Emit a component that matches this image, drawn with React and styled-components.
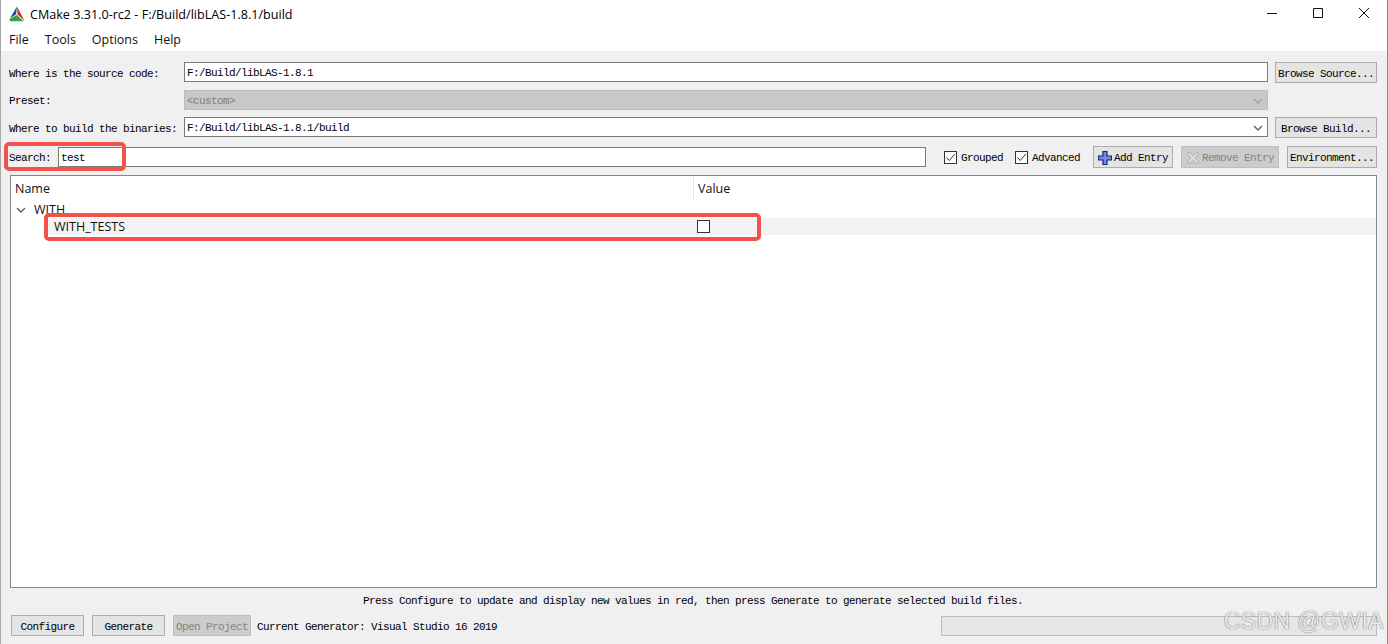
import React from 'react'
import styled, { createGlobalStyle } from 'styled-components'

const GlobalStyle = createGlobalStyle`
  html, body { margin: 0; padding: 0; height: 100%; background: #fff; }
  #root { height: 100%; }
  * { box-sizing: border-box; }
`

const bitmapFont = `
  font-family: "Liberation Mono", "Noto Sans CJK SC", monospace;
  font-size: 11px;
  letter-spacing: -0.6px;
  color: #000;
  white-space: pre;
`

const Window = styled.div`
  position: relative;
  width: 1388px;
  height: 644px;
  display: flex;
  flex-direction: column;
  overflow: hidden;
  background: #fff;
  border-left: 1px solid #a8a8a8;
  border-right: 1px solid #8a8a8a;
  font-family: "Open Sans", "Noto Sans", sans-serif;
`

const TitleBar = styled.div`
  height: 28px;
  flex: none;
  display: flex;
  align-items: center;
  padding-left: 8px;
  font-size: 12.6px;
  color: #000;
`

const TitleText = styled.span`
  margin-left: 5px;
  flex: 1;
`

const WinButtons = styled.div`
  display: flex;
  height: 100%;
  align-items: center;
  padding: 0 18px 2px 0;
  gap: 36px;
`

const MenuBar = styled.div`
  height: 23px;
  flex: none;
  display: flex;
  padding: 3px 0 0 8px;
  gap: 16px;
  font-size: 12.5px;
  color: #111;
`

const Body = styled.div`
  flex: 1;
  display: flex;
  flex-direction: column;
  background: #f0f0f0;
  padding: 11px 10px 8px 8px;
`

const PathGrid = styled.div`
  display: grid;
  grid-template-columns: 168px 1fr 102px;
  grid-template-rows: 28px 27px 21px;
  column-gap: 7px;
  align-items: start;
`

const Label = styled.span`
  ${bitmapFont}
  display: block;
  padding-top: ${({ $top }) => $top || 5}px;
`

const Field = styled.div`
  height: 20px;
  display: flex;
  align-items: center;
  justify-content: space-between;
  padding: 1px 4px 0 2px;
  background: ${({ $disabled }) => ($disabled ? '#c8c8c8' : '#fff')};
  border: 1px solid ${({ $disabled }) => ($disabled ? '#bcbcbc' : '#7a7a7a')};
  ${bitmapFont}
  color: ${({ $disabled }) => ($disabled ? '#7d7d7d' : '#000')};
  width: ${({ $width }) => ($width ? `${$width}px` : 'auto')};
`

const Button = styled.div`
  height: ${({ $h }) => $h || 21}px;
  width: ${({ $w }) => ($w ? `${$w}px` : 'auto')};
  flex: none;
  display: flex;
  align-items: center;
  justify-content: center;
  padding-top: 2px;
  background: ${({ $disabled }) => ($disabled ? '#cccccc' : '#e4e4e4')};
  border: 1px solid ${({ $disabled }) => ($disabled ? '#bfbfbf' : '#adadad')};
  ${bitmapFont}
  color: ${({ $disabled }) => ($disabled ? '#838383' : '#000')};
`

const SearchRow = styled.div`
  display: flex;
  align-items: center;
  height: 22px;
  margin-top: 8px;
`

const SearchLabel = styled(Label)`
  width: 49px;
  flex: none;
  padding-top: 2px;
`

const Check = styled.div`
  display: flex;
  align-items: center;
  gap: 4px;
  margin-left: ${({ $ml }) => $ml}px;
  padding-top: 1px;
  ${bitmapFont}
`

const CheckBox = styled.div`
  width: 13px;
  height: 13px;
  flex: none;
  display: flex;
  align-items: center;
  justify-content: center;
  background: #fff;
  border: 1px solid #333;
`

const ButtonGroup = styled.div`
  display: flex;
  gap: 8px;
  margin-left: 13px;
`

const IconButton = styled(Button)`
  gap: 2px;
`

const Table = styled.div`
  margin: 7px 0 0 1px;
  height: 413px;
  flex: none;
  background: #fff;
  border: 1px solid #828790;
  font-size: 12.5px;
  color: #111;
`

const HeaderRow = styled.div`
  height: 25px;
  display: grid;
  grid-template-columns: 683px 1fr;
`

const HeaderCell = styled.div`
  display: flex;
  align-items: center;
  padding-left: ${({ $pad }) => $pad}px;
  border-right: ${({ $sep }) => ($sep ? '1px solid #e5e5e5' : 'none')};
`

const GroupRow = styled.div`
  height: 17px;
  display: flex;
  align-items: center;
  padding-left: 5px;
  gap: 8px;
`

const EntryRow = styled.div`
  height: 17px;
  margin-left: 35px;
  display: grid;
  grid-template-columns: 647px 1fr;
  align-items: center;
  background: #f3f3f3;
`

const EntryName = styled.span`
  padding: 0 0 1px 8px;
`

const EntryCheck = styled.div`
  width: 13px;
  height: 13px;
  margin: 0 0 1px 4px;
  background: #fff;
  border: 1px solid #333;
`

const StatusText = styled.div`
  height: 27px;
  display: flex;
  align-items: center;
  justify-content: center;
  padding-bottom: 1px;
  ${bitmapFont}
`

const BottomRow = styled.div`
  display: flex;
  align-items: center;
  height: 21px;
  padding-left: 2px;
  gap: 8px;
`

const GeneratorText = styled.span`
  ${bitmapFont}
  margin-left: -2px;
  padding-top: 3px;
  flex: 1;
`

const Progress = styled.div`
  width: 436px;
  height: 20px;
  background: #e6e6e6;
  border: 1px solid #bcbcbc;
`

const Callout = styled.div`
  position: absolute;
  left: ${({ $x }) => $x}px;
  top: ${({ $y }) => $y}px;
  width: ${({ $w }) => $w}px;
  height: ${({ $h }) => $h}px;
  border: 4px solid #f4504c;
  border-radius: 5px;
  pointer-events: none;
`

const Watermark = styled.div`
  position: absolute;
  right: 3px;
  top: 608px;
  font-family: "Liberation Sans", Arial, sans-serif;
  font-size: 23px;
  letter-spacing: 0.4px;
  color: rgba(255, 255, 255, 0.85);
  text-shadow: 0 0 1px #777, 0 0 1px #777;
  white-space: pre;
`

const Chevron = ({ color = '#606060', size = 10 }) => (
  <svg width={size} height={size * 0.6} viewBox="0 0 10 6" fill="none">
    <path d="M1 1l4 4 4-4" stroke={color} strokeWidth="1.4" />
  </svg>
)

const CMakeLogo = () => (
  <svg width="16" height="16" viewBox="0 0 16 16">
    <path d="M8 0.5L1 12.2 7.2 8.2z" fill="#1f4e9c" />
    <path d="M8 0.5L15.5 15 8.6 8.6z" fill="#d3262c" />
    <path d="M0.5 13L7.8 9 14.6 15.2H1z" fill="#3b9e43" />
    <path d="M8 1.5L7.6 8.4 8.4 8.6z" fill="#c8c8c8" />
  </svg>
)

const Tick = () => (
  <svg width="11" height="11" viewBox="0 0 11 11" fill="none">
    <path d="M1.5 5.5L4.3 8.5 9.8 2" stroke="#333" strokeWidth="1" />
  </svg>
)

const PlusIcon = () => (
  <svg width="14" height="14" viewBox="0 0 14 14">
    <path
      d="M5 .5h4v4.500h4.500v4H9v4.500H5V9H.5V5H5z"
      fill="#6f8fd8"
      stroke="#12238a"
      strokeWidth="1.2"
    />
  </svg>
)

const RemoveIcon = () => (
  <svg width="14" height="14" viewBox="0 0 14 14">
    <path
      d="M3 1l4 3.500L11 1l2 2-3.500 4L13 11l-2 2-4-3.500L3 13l-2-2 3.500-4L1 3z"
      fill="#dadada"
      stroke="#adadad"
      strokeWidth="1"
    />
  </svg>
)

const Minimize = () => (
  <svg width="10" height="10" viewBox="0 0 10 10">
    <path d="M0 5.500h10" stroke="#111" strokeWidth="1" />
  </svg>
)

const Maximize = () => (
  <svg width="10" height="10" viewBox="0 0 10 10" fill="none">
    <path d="M.5.500h9v9h-9z" stroke="#111" strokeWidth="1" />
  </svg>
)

const CloseIcon = () => (
  <svg width="10" height="10" viewBox="0 0 10 10" fill="none">
    <path d="M0 0l10 10M10 0L0 10" stroke="#111" strokeWidth="1" />
  </svg>
)

export default function App() {
  return (
    <>
      <GlobalStyle />
      <Window>
        <TitleBar>
          <CMakeLogo />
          <TitleText>CMake 3.31.0-rc2 - F:/Build/libLAS-1.8.1/build</TitleText>
          <WinButtons>
            <Minimize />
            <Maximize />
            <CloseIcon />
          </WinButtons>
        </TitleBar>
        <MenuBar>
          <span>File</span>
          <span>Tools</span>
          <span>Options</span>
          <span>Help</span>
        </MenuBar>
        <Body>
          <PathGrid>
            <Label $top={6}>Where is the source code:</Label>
            <Field>F:/Build/libLAS-1.8.1</Field>
            <Button>Browse Source...</Button>
            <Label>Preset:</Label>
            <Field $disabled>
              {'<custom>'}
              <Chevron color="#a0a0a0" />
            </Field>
            <span />
            <Label $top={6}>Where to build the binaries:</Label>
            <Field>
              F:/Build/libLAS-1.8.1/build
              <Chevron />
            </Field>
            <Button>Browse Build...</Button>
          </PathGrid>
          <SearchRow>
            <SearchLabel>Search:</SearchLabel>
            <Field $width={868}>test</Field>
            <Check $ml={18}>
              <CheckBox>
                <Tick />
              </CheckBox>
              Grouped
            </Check>
            <Check $ml={12}>
              <CheckBox>
                <Tick />
              </CheckBox>
              Advanced
            </Check>
            <ButtonGroup>
              <IconButton $w={80} $h={22}>
                <PlusIcon />
                Add Entry
              </IconButton>
              <IconButton $w={98} $h={22} $disabled>
                <RemoveIcon />
                Remove Entry
              </IconButton>
              <Button $w={90} $h={22}>Environment...</Button>
            </ButtonGroup>
          </SearchRow>
          <Table>
            <HeaderRow>
              <HeaderCell $pad={4} $sep>Name</HeaderCell>
              <HeaderCell $pad={4}>Value</HeaderCell>
            </HeaderRow>
            <GroupRow>
              <Chevron />
              <span>WITH</span>
            </GroupRow>
            <EntryRow>
              <EntryName>WITH_TESTS</EntryName>
              <EntryCheck />
            </EntryRow>
          </Table>
          <StatusText>
            Press Configure to update and display new values in red, then press Generate to generate selected build files.
          </StatusText>
          <BottomRow>
            <Button $w={73}>Configure</Button>
            <Button $w={73}>Generate</Button>
            <Button $w={78} $disabled>Open Project</Button>
            <GeneratorText>Current Generator: Visual Studio 16 2019</GeneratorText>
            <Progress />
          </BottomRow>
        </Body>
        <Callout $x={3} $y={142} $w={122} $h={29} />
        <Callout $x={43} $y={213} $w={717} $h={28} />
        <Watermark>CSDN @GWIA</Watermark>
      </Window>
    </>
  )
}
